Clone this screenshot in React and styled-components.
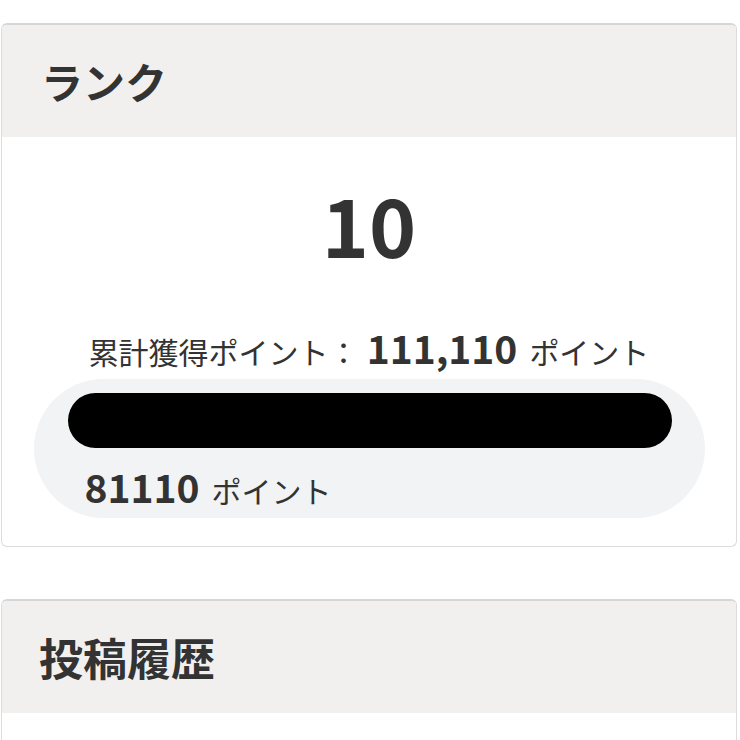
import styled, { createGlobalStyle } from 'styled-components'

const GlobalStyle = createGlobalStyle`
  html, body {
    margin: 0;
    padding: 0;
    background: #fff;
  }
  body {
    font-family: "Noto Sans CJK JP", "Noto Sans", sans-serif;
    color: #333;
  }
`

const Page = styled.div`
  width: 736px;
  padding: 23px 0 0 1px;
  display: flex;
  flex-direction: column;
  gap: 52px;
`

const Card = styled.section`
  border: 1px solid #dcdcdc;
  border-top: 2px solid #d6d6d6;
  border-radius: 6px;
  overflow: hidden;
  background: #fff;
`

const CardHeader = styled.div`
  height: 112px;
  background: #f1f0ef;
  display: flex;
  align-items: center;
  padding-left: ${p => p.$pad || 39}px;
`

const Title = styled.h2`
  margin: 0;
  font-size: ${p => p.$size || 42}px;
  font-weight: 700;
  color: #333;
  line-height: 1;
`

const CardBody = styled.div`
  padding: 46px 0 28px;
  display: flex;
  flex-direction: column;
  align-items: center;
`

const Rank = styled.div`
  font-size: 80px;
  font-weight: 700;
  line-height: 80px;
  color: #333;
`

const Total = styled.div`
  margin-top: 60px;
  font-size: 30px;
  line-height: 48px;
  color: #333;
  display: flex;
  align-items: baseline;
`

const Num = styled.span`
  font-size: 39px;
  font-weight: 700;
  margin: 0 12px 0 ${p => p.$gap || 0}px;
`

const Progress = styled.div`
  margin-top: 4px;
  width: 671px;
  box-sizing: border-box;
  padding: 14px 33px 8px 34px;
  background: #f2f3f5;
  border-radius: 70px;
  display: flex;
  flex-direction: column;
`

const Bar = styled.div`
  height: 55px;
  border-radius: 28px;
  background: #000;
`

const Current = styled.div`
  margin-top: 18px;
  padding-left: 17px;
  font-size: 30px;
  line-height: 40px;
  display: flex;
  align-items: baseline;
  color: #333;
`

export default function App() {
  return (
    <>
      <GlobalStyle />
      <Page>
        <Card>
          <CardHeader>
            <Title>ランク</Title>
          </CardHeader>
          <CardBody>
            <Rank>10</Rank>
            <Total>
              累計獲得ポイント：<Num $gap={8}>111,110</Num>ポイント
            </Total>
            <Progress>
              <Bar />
              <Current>
                <Num>81110</Num>ポイント
              </Current>
            </Progress>
          </CardBody>
        </Card>
        <Card>
          <CardHeader $pad={37}>
            <Title $size={44}>投稿履歴</Title>
          </CardHeader>
          <CardBody />
        </Card>
      </Page>
    </>
  )
}
